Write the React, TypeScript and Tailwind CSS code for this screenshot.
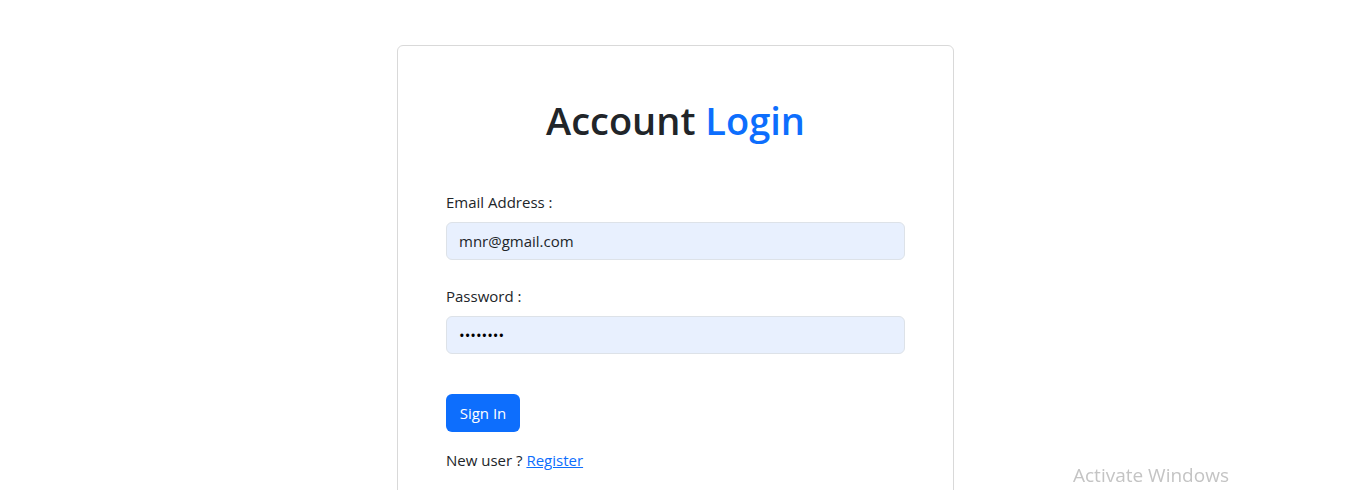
export default function App() {
  return (
    <div className="min-h-screen bg-white pl-[3px] pt-[45px] font-['Open_Sans',sans-serif] text-[#212529]">
      {/* Login card */}
      <div className="mx-auto w-[557px] rounded-md border border-[#d9d9d9] px-12 pb-12 pt-[50px]">
        <h1 className="text-center text-[38px] font-semibold leading-[48px]">
          Account <span className="text-[#0d6efd]">Login</span>
        </h1>

        <form className="mt-[46px]" onSubmit={(e) => e.preventDefault()}>
          <label htmlFor="email" className="mb-2 block text-[15px] leading-6">
            Email Address :
          </label>
          <input
            id="email"
            type="email"
            defaultValue="mnr@gmail.com"
            className="block h-[38px] w-full rounded-md border border-[#dde2e8] bg-[#e8f0fe] px-3 text-[15px] text-[#212529] outline-none"
          />

          <label htmlFor="password" className="mb-2 mt-6 block text-[15px] leading-6">
            Password :
          </label>
          <input
            id="password"
            type="password"
            defaultValue="12345678"
            className="block h-[38px] w-full rounded-md border border-[#dde2e8] bg-[#e8f0fe] px-3 text-[15px] text-black outline-none"
          />

          <button
            type="submit"
            className="mt-10 h-[38px] w-[74px] rounded-md bg-[#0d6efd] text-[15px] text-white"
          >
            Sign In
          </button>

          <p className="mt-4 text-[15px] leading-6">
            New user ?{" "}
            <a href="#" className="text-[#0d6efd] underline">
              Register
            </a>
          </p>
        </form>
      </div>

      {/* Windows watermark */}
      <div className="fixed left-[1073px] top-[461px] text-[19px] text-[#c4c4c4]">
        Activate Windows
      </div>
    </div>
  )
}
